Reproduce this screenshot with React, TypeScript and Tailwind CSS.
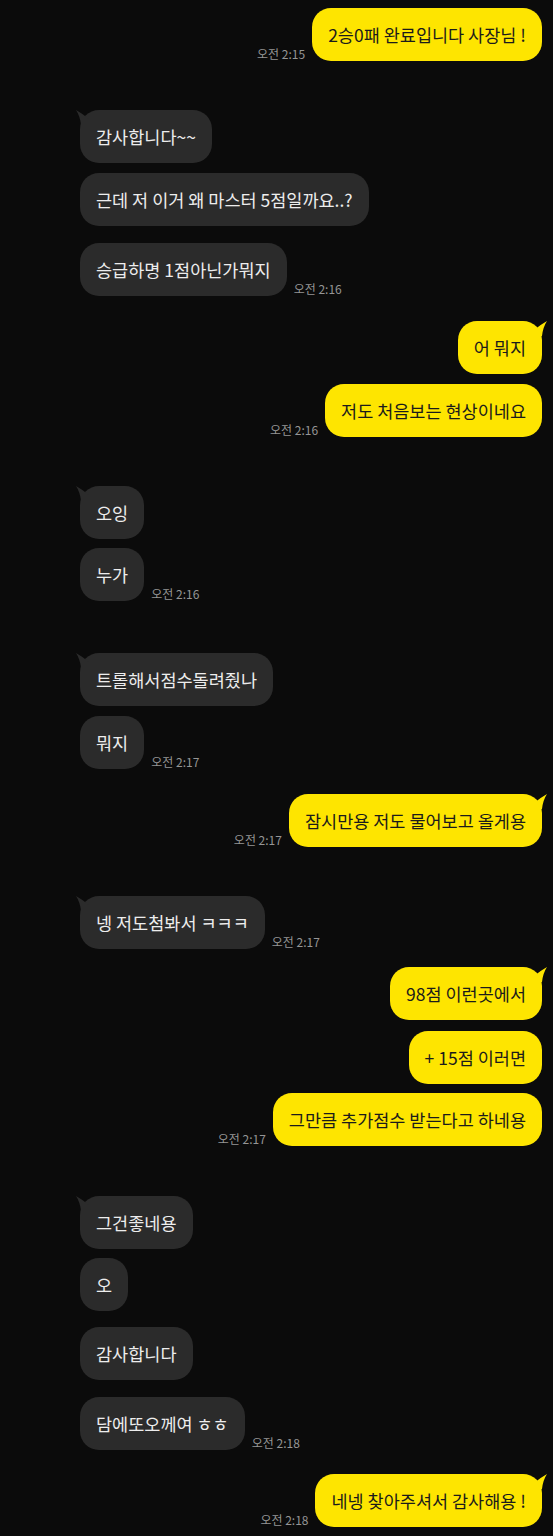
import React from "react";

type Msg = {
  me: boolean;
  text: string;
  mt: string;
  tail?: boolean;
  time?: string;
};

const msgs: Msg[] = [
  { me: true, text: "2승0패 완료입니다 사장님 !", mt: "mt-[8px]", time: "오전 2:15" },
  { me: false, text: "감사합니다~~", mt: "mt-[49px]", tail: true },
  { me: false, text: "근데 저 이거 왜 마스터 5점일까요..?", mt: "mt-[10px]" },
  { me: false, text: "승급하명 1점아닌가뭐지", mt: "mt-[17px]", time: "오전 2:16" },
  { me: true, text: "어 뭐지", mt: "mt-[25px]", tail: true },
  { me: true, text: "저도 처음보는 현상이네요", mt: "mt-[10px]", time: "오전 2:16" },
  { me: false, text: "오잉", mt: "mt-[49px]", tail: true },
  { me: false, text: "누가", mt: "mt-[9px]", time: "오전 2:16" },
  { me: false, text: "트롤해서점수돌려줬나", mt: "mt-[52px]", tail: true },
  { me: false, text: "뭐지", mt: "mt-[10px]", time: "오전 2:17" },
  { me: true, text: "잠시만용 저도 물어보고 올게용", mt: "mt-[25px]", tail: true, time: "오전 2:17" },
  { me: false, text: "넹 저도첨봐서 ㅋㅋㅋ", mt: "mt-[49px]", tail: true, time: "오전 2:17" },
  { me: true, text: "98점 이런곳에서", mt: "mt-[18px]", tail: true },
  { me: true, text: "+ 15점 이러면", mt: "mt-[11px]" },
  { me: true, text: "그만큼 추가점수 받는다고 하네용", mt: "mt-[9px]", time: "오전 2:17" },
  { me: false, text: "그건좋네용", mt: "mt-[50px]", tail: true },
  { me: false, text: "오", mt: "mt-[9px]" },
  { me: false, text: "감사합니다", mt: "mt-[16px]" },
  { me: false, text: "담에또오께여 ㅎㅎ", mt: "mt-[17px]", time: "오전 2:18" },
  { me: true, text: "네넹 찾아주셔서 감사해용 !", mt: "mt-[24px]", tail: true, time: "오전 2:18" },
];

const FONT = { fontFamily: '"Noto Sans CJK KR", "Noto Sans", sans-serif' };

function Time({ t }: { t: string }) {
  return (
    <span className="text-[12px] leading-[14px] text-[#959595] whitespace-nowrap">
      {t}
    </span>
  );
}

function Bubble({ m }: { m: Msg }) {
  return (
    <div
      className={
        m.me
          ? "relative h-[53px] flex items-center px-[16px] rounded-[19px] bg-[#fee500] text-[#1b1b1b] text-[17.5px] leading-[22px] whitespace-nowrap"
          : "relative h-[53px] flex items-center px-[16px] rounded-[19px] bg-[#2b2b2b] text-[#ededed] text-[17.5px] leading-[22px] whitespace-nowrap"
      }
    >
      {m.tail && m.me && (
        <svg
          className="absolute top-0 right-[-5px]"
          width="14"
          height="16"
          viewBox="0 0 14 16"
        >
          <path d="M1 9 Q7 4 14 0 Q10 6 9 15 L1 15 Z" fill="#fee500" />
        </svg>
      )}
      {m.tail && !m.me && (
        <svg
          className="absolute top-0 left-[-4px]"
          width="14"
          height="16"
          viewBox="0 0 14 16"
        >
          <path d="M13 9 Q7 4 0 0 Q4 6 5 15 L13 15 Z" fill="#2b2b2b" />
        </svg>
      )}
      <span>{m.text}</span>
    </div>
  );
}

export default function App() {
  return (
    <div className="w-full min-h-[1536px] bg-[#0b0b0b] flex flex-col pb-[9px]" style={FONT}>
      {msgs.map((m, i) => (
        <div
          key={i}
          className={
            m.me
              ? `${m.mt} flex justify-end items-end gap-[7px] pr-[11px]`
              : `${m.mt} flex justify-start items-end gap-[7px] pl-[80px]`
          }
        >
          {m.me && m.time && <Time t={m.time} />}
          <Bubble m={m} />
          {!m.me && m.time && <Time t={m.time} />}
        </div>
      ))}
    </div>
  );
}
